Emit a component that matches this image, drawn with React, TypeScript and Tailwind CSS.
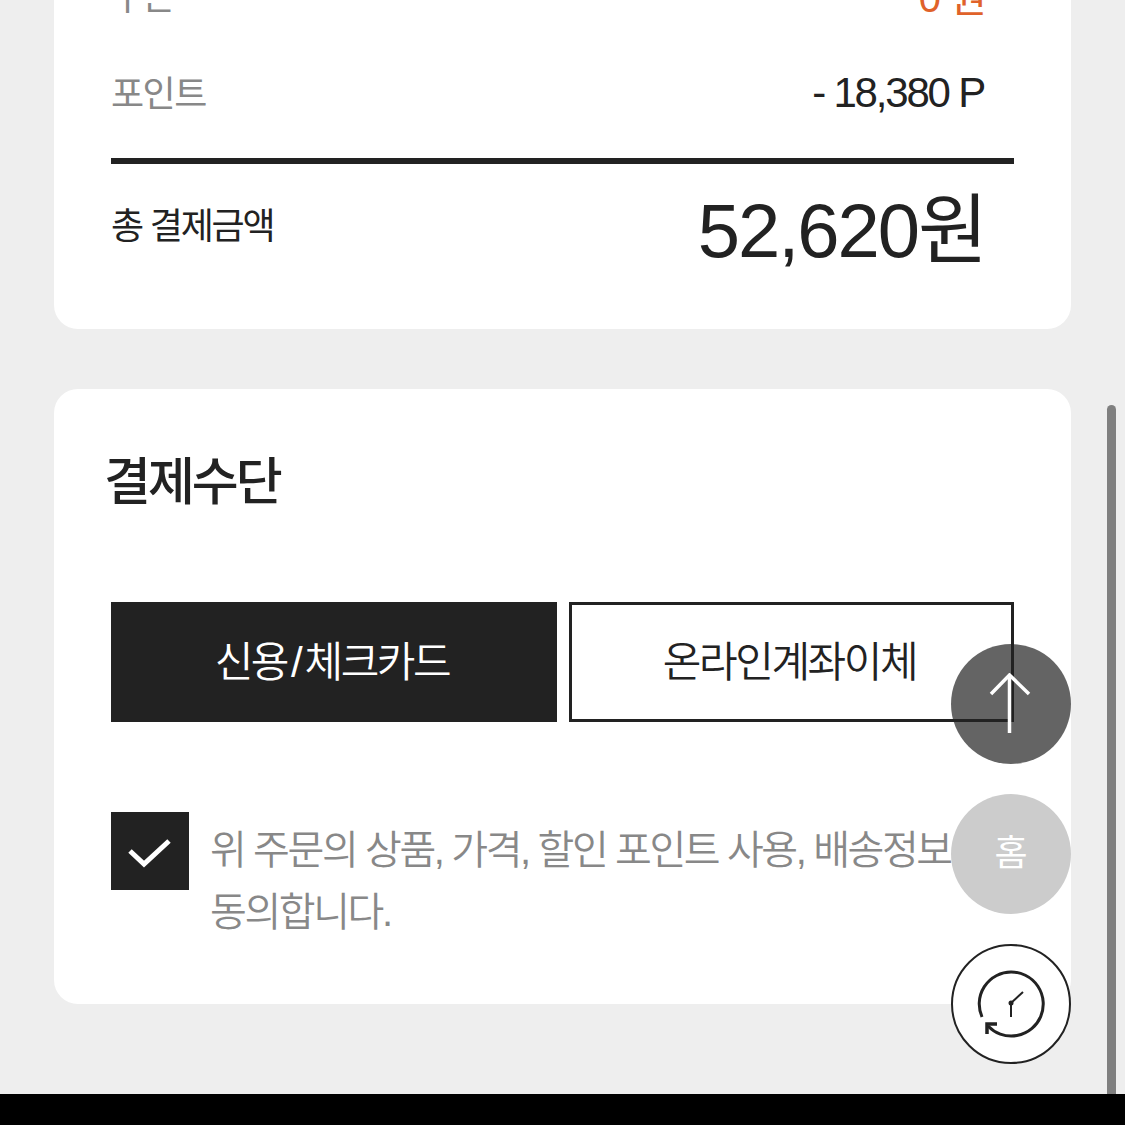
import React from 'react';

const font = "font-['Liberation_Sans','Noto_Sans_CJK_KR',sans-serif]";

const App: React.FC = () => {
    return (
        <div className={`relative w-[1125px] h-[1125px] overflow-hidden bg-[#eeeeee] flex flex-col ${font}`}>
            <div className="flex-1 min-h-0 overflow-hidden px-[54px]">
                {/* Order summary */}
                <section className="w-[1017px] h-[429px] -mt-[100px] bg-white rounded-b-[24px] px-[57px] flex flex-col justify-end pb-[37px]">
                    <div className="flex items-center justify-between h-[40px] pr-[28px] mb-[57px]">
                        <span className="text-[36px] tracking-[-1.5px] text-[#888888]">쿠폰</span>
                        <span className="text-[40px] tracking-[-1px] text-[#e0622a]">0 원</span>
                    </div>
                    <div className="flex items-center justify-between h-[40px] pr-[30px] mb-[43px]">
                        <span className="text-[36px] tracking-[-1.5px] text-[#888888]">포인트</span>
                        <span className="text-[42px] tracking-[-2.2px] text-[#222222] -mt-[6px]">- 18,380 P</span>
                    </div>
                    <div className="h-[6px] bg-[#222222]" />
                    <div className="flex items-center justify-between h-[128px] pr-[28px]">
                        <span className="text-[36px] tracking-[-2.2px] text-[#222222] -mt-[2px]">총 결제금액</span>
                        <span className="text-[76px] tracking-[-2px] text-[#222222] mt-[6px]">52,620원</span>
                    </div>
                </section>

                {/* Payment method */}
                <section className="w-[1017px] h-[615px] mt-[60px] bg-white rounded-[24px] px-[57px] pt-[61px]">
                    <h2 className="text-[51px] leading-[66px] font-medium tracking-[-3px] text-[#222222] -ml-[7px]">결제수단</h2>
                    <div className="flex gap-[12px] mt-[86px]">
                        <button className="w-[446px] h-[120px] bg-[#222222] text-white text-[42px] font-[350] tracking-[-2.4px] pr-[4px]">
                            신용<span className="mx-[4px]">/</span>체크카드
                        </button>
                        <button className="w-[445px] h-[120px] bg-white border-[3px] border-[#222222] text-[#222222] text-[42px] font-[350] tracking-[-2.4px] pr-[4px]">
                            온라인계좌이체
                        </button>
                    </div>
                    <div className="flex gap-[21px] mt-[90px]">
                        <span className="w-[78px] h-[78px] shrink-0 bg-[#222222] flex items-center justify-center">
                            <svg width="44" height="34" viewBox="0 0 44 34" fill="none" stroke="#ffffff" strokeWidth="5">
                                <path d="M2 17 L16 30 L41 7" />
                            </svg>
                        </span>
                        <p className="text-[40px] leading-[62px] font-[350] tracking-[-2.4px] text-[#888888] whitespace-nowrap pt-[7px]">
                            위 주문의 상품, 가격, 할인 포인트 사용, 배송정보에
                            <br />
                            동의합니다.
                        </p>
                    </div>
                </section>
            </div>

            <div className="h-[31px] shrink-0 bg-black" />

            {/* Scrollbar */}
            <div className="absolute left-[1107px] top-[405px] w-[9px] h-[689px] bg-[#7f7f7f] rounded-t-full" />

            {/* Floating buttons */}
            <button className="absolute left-[951px] top-[644px] w-[120px] h-[120px] rounded-full bg-[#222222]/70 flex items-center justify-center">
                <svg className="-ml-[3px]" width="44" height="62" viewBox="0 0 44 62" fill="none" stroke="#ffffff" strokeWidth="3.5">
                    <path d="M3 21 L21.5 2 L41 21" />
                    <path d="M21.5 2 V60" />
                </svg>
            </button>
            <button className="absolute left-[951px] top-[794px] w-[120px] h-[120px] rounded-full bg-[#cccccc] flex items-center justify-center text-white text-[36px]">
                홈
            </button>
            <button className="absolute left-[951px] top-[944px] w-[120px] h-[120px] rounded-full bg-white border-2 border-[#222222] flex items-center justify-center">
                <svg width="72" height="72" viewBox="0 0 72 72" fill="none" stroke="#222222">
                    <path d="M7 49 A32 32 0 1 1 13 58" strokeWidth="3" />
                    <path d="M22 56 H12 V66" strokeWidth="3.5" />
                    <path d="M36 35 V49" strokeWidth="2" />
                    <path d="M36 35 L48 24" strokeWidth="2" />
                    <circle cx="36" cy="35" r="2.5" fill="#222222" stroke="none" />
                </svg>
            </button>
        </div>
    );
};

export default App;
